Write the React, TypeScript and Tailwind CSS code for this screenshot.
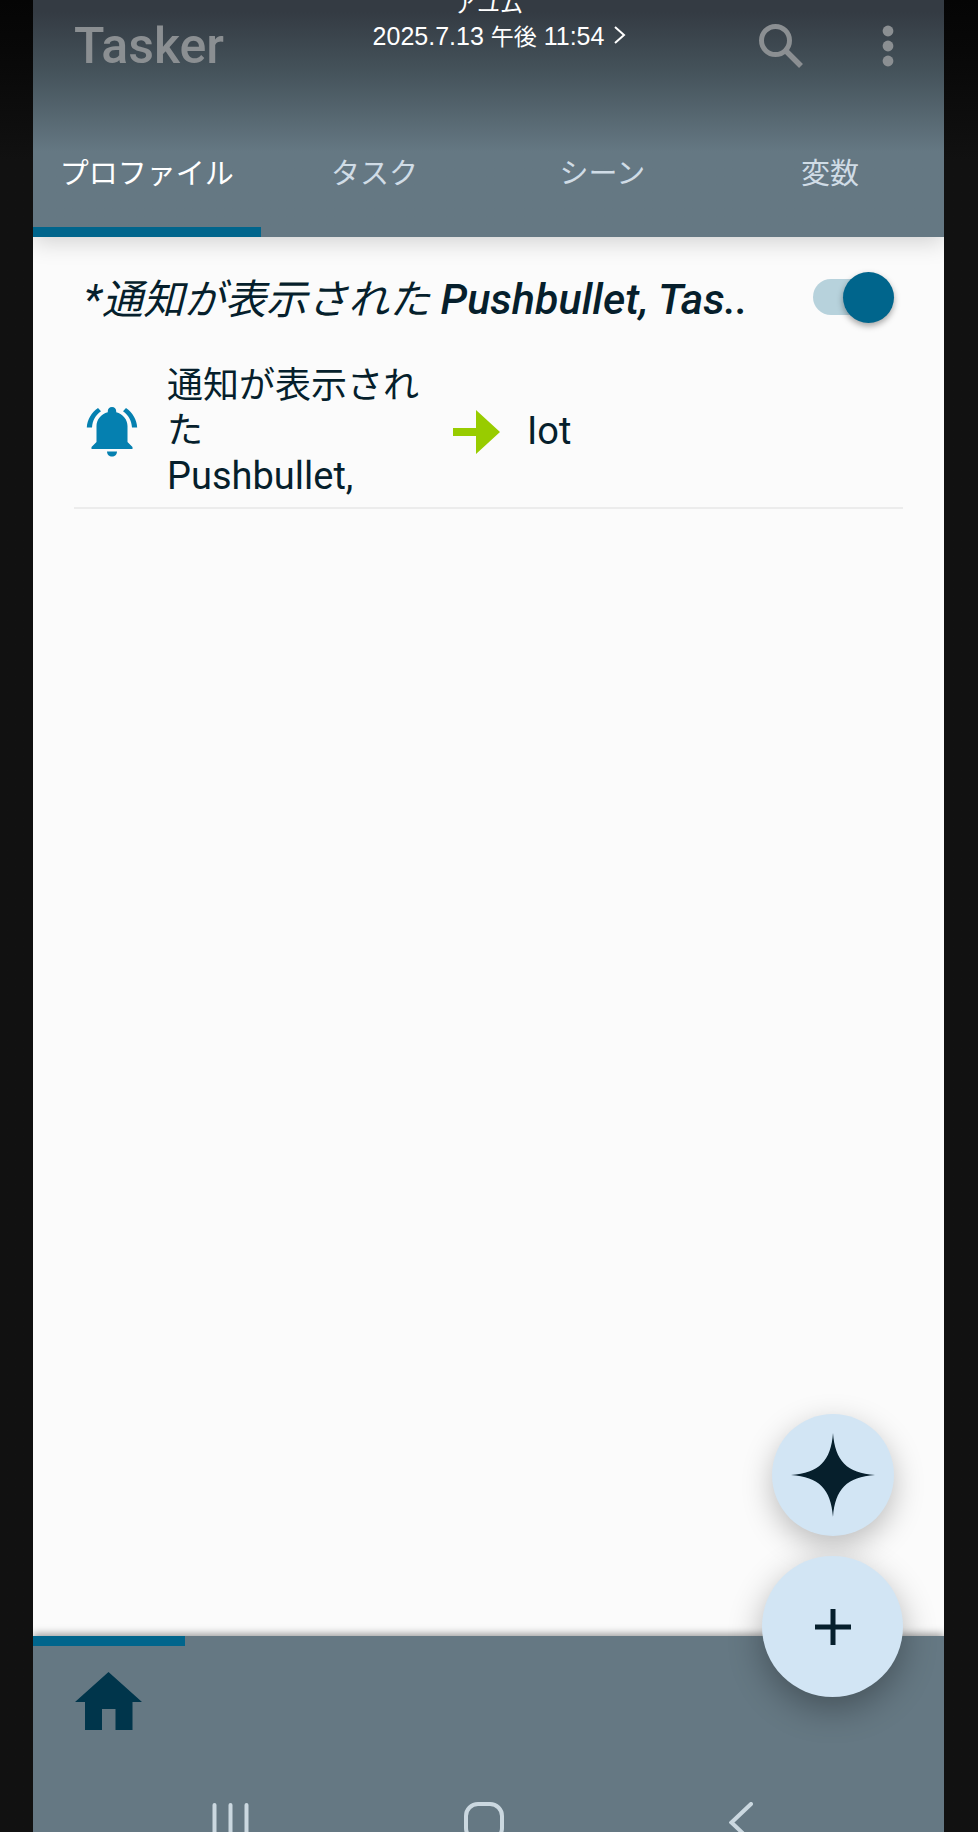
import { useState } from "react";

const tabs = ["プロファイル", "タスク", "シーン", "変数"];

function SearchIcon() {
  return (
    <svg viewBox="0 0 44 44" className="size-11" fill="none" stroke="currentColor">
      <circle cx="16.500" cy="16.500" r="14" strokeWidth="5" />
      <path d="M27 27L42 42" strokeWidth="5.500" />
      <path d="M25 28L29 24" strokeWidth="2" />
    </svg>
  );
}

function MoreIcon() {
  return (
    <svg viewBox="0 0 12 42" className="h-[42px] w-3" fill="currentColor">
      <circle cx="6" cy="6" r="5.400" />
      <circle cx="6" cy="21" r="5.400" />
      <circle cx="6" cy="36" r="5.400" />
    </svg>
  );
}

function BellIcon() {
  return (
    <svg viewBox="0 0 52 50" className="h-[50px] w-[52px] shrink-0 text-[#0580b0]" fill="currentColor">
      <path d="M26 0c-2.600 0-4.200 1.800-4.200 4v1.200C15 7 10.500 12.500 10.500 19v16L5.500 40v2h41v-2L41.500 35V19c0-6.500-4.500-12-11.300-13.800V4c0-2.200-1.600-4-4.200-4z" />
      <path d="M21 44.500h10c0 3-2.200 5-5 5s-5-2-5-5z" />
      <path d="M12 1l3 3.200C9.500 8 6.500 13.500 6 20.500H.8C1.200 12.500 5.500 5.500 12 1z" />
      <path d="M40 1l-3 3.200c5.500 3.800 8.500 9.300 9 16.300h5.200C50.800 12.500 46.500 5.500 40 1z" />
    </svg>
  );
}

function ArrowIcon() {
  return (
    <svg viewBox="0 0 47 44" className="h-11 w-[47px] shrink-0 text-[#98cc00]" fill="currentColor">
      <path d="M0 18h23V0l24 22-24 22V26H0z" />
    </svg>
  );
}

function HomeIcon() {
  return (
    <svg viewBox="0 0 67 58" className="h-[58px] w-[67px]" fill="#00354b">
      <path d="M33.500 0L67 30H57.500V58H40.500V37H27V58H10V30H0z" />
    </svg>
  );
}

export default function App() {
  const [active, setActive] = useState(0);
  const [enabled, setEnabled] = useState(true);

  return (
    <div className="min-h-screen bg-[#111] bg-linear-to-b from-[#050505] to-[#111] to-[160px] pl-[33px] pr-[34px] font-[Roboto,'Noto_Sans_CJK_JP',sans-serif]">
      <div className="relative flex min-h-screen flex-col overflow-hidden bg-[#fbfbfb]">
        <header className="relative z-10 bg-[#657883] bg-linear-to-b from-[#343b43] from-[12px] via-[#45535b] via-[72px] to-[#657883] to-[152px] shadow-[0_5px_22px_rgba(0,0,0,0.17)]">
          <div className="flex h-[92px] items-center justify-between pl-[41px] pr-[50px] text-[#8b8f92]">
            <h1 className="text-[50px] leading-none font-medium">Tasker</h1>
            <div className="flex items-center gap-[79px]">
              <button aria-label="検索"><SearchIcon /></button>
              <button aria-label="メニュー"><MoreIcon /></button>
            </div>
          </div>
          <div className="absolute inset-x-0 -top-3 flex flex-col items-center font-['Liberation_Sans','Noto_Sans_CJK_JP',sans-serif] leading-8 text-white">
            <div className="text-[23px]">アユム</div>
            <div className="relative text-[25px] whitespace-nowrap">
              2025.7.13 <span className="text-[23px]">午後</span> 11:54
              <svg viewBox="0 0 12 18" className="absolute top-[6px] left-full ml-2.5 h-[18px] w-3" fill="none" stroke="currentColor" strokeWidth="2">
                <path d="M1 1L10 9L1 17" />
              </svg>
            </div>
          </div>
          <div role="tablist" className="mt-[27px] grid grid-cols-4">
            {tabs.map((tab, i) => (
              <button
                key={tab}
                role="tab"
                aria-selected={i === active}
                onClick={() => setActive(i)}
                className={
                  i === active
                    ? "flex h-[118px] items-center justify-center border-b-10 border-[#00658c] pt-1 text-[29px] text-white"
                    : "flex h-[118px] items-center justify-center border-b-10 border-transparent pt-1 text-[29px] text-[#d0dce6]"
                }
              >
                {tab}
              </button>
            ))}
          </div>
        </header>

        <main className="flex-1 px-[41px] text-[#061f2c]">
          <section className="border-b-2 border-[#ececec] pt-[28px] pb-[8px]">
            <div className="flex items-start justify-between pr-[9px] pl-[10px]">
              <h2 className="pt-0.5 text-[43px] leading-[64px] whitespace-nowrap italic">
                *<span className="text-[41px]">通知が表示された</span> <span className="font-medium">Pushbullet, Tas..</span>
              </h2>
              <button role="switch" aria-checked={enabled} aria-label="プロファイルを有効化" onClick={() => setEnabled(!enabled)} className="flex h-16 w-[81px] shrink-0 items-center">
                <span className="flex h-9 w-[76px] items-center rounded-full bg-[#b7d2dc] pl-[30px]">
                  <span className="size-[51px] shrink-0 rounded-full bg-[#00658c] shadow-[0_3px_6px_rgba(0,0,0,0.35)]" />
                </span>
              </button>
            </div>
            <div className="mt-8 flex items-center pl-3">
              <BellIcon />
              <div className="ml-[29px] w-[256px] leading-[45px]">
                <p className="text-[36px]">通知が表示された</p>
                <p className="text-[38px]">Pushbullet,</p>
              </div>
              <div className="ml-[30px]"><ArrowIcon /></div>
              <p className="ml-[27px] text-[38px] leading-[45px]">Iot</p>
            </div>
          </section>
        </main>

        <footer className="relative h-[196px] bg-[#657883] shadow-[0_-2px_8px_rgba(0,0,0,0.4)]">
          <div className="h-2.5 w-[152px] bg-[#00658c]" />
          <button aria-label="ホーム" className="mt-[26px] ml-[42px] block"><HomeIcon /></button>
          <nav className="mt-[72px] flex h-[30px] items-start justify-between overflow-hidden pr-[191px] pl-[178px] text-[#cbd8e0]">
            <button aria-label="最近使ったアプリ">
              <svg viewBox="0 0 40 40" className="size-10" fill="none" stroke="currentColor" strokeWidth="4" strokeLinecap="round">
                <path d="M3.500 3V38M19.500 3V38M35.500 3V38" />
              </svg>
            </button>
            <button aria-label="ホーム画面" className="mr-3">
              <svg viewBox="0 0 40 40" className="size-10" fill="none" stroke="currentColor" strokeWidth="4">
                <rect x="2" y="2" width="36" height="36" rx="12" />
              </svg>
            </button>
            <button aria-label="戻る">
              <svg viewBox="0 0 24 44" className="h-11 w-6" fill="none" stroke="currentColor" strokeWidth="4" strokeLinecap="round">
                <path d="M22 2L2.500 20.500L22 39" />
              </svg>
            </button>
          </nav>
        </footer>

        <div className="absolute right-[41px] bottom-[135px] z-20 flex flex-col items-center gap-[20px]">
          <button aria-label="AI で作成" className="flex size-[122px] items-center justify-center rounded-full bg-[#d2e5f4] shadow-[0_10px_30px_rgba(0,0,0,0.25)]">
            <svg viewBox="0 0 84 84" className="size-[84px]" fill="#061f2c">
              <path d="M42 0C44 28 56 40 84 42C56 44 44 56 42 84C40 56 28 44 0 42C28 40 40 28 42 0z" />
            </svg>
          </button>
          <button aria-label="追加" className="flex size-[141px] items-center justify-center rounded-full bg-[#d2e5f4] shadow-[0_12px_34px_rgba(0,0,0,0.3)]">
            <svg viewBox="0 0 36 36" className="size-9" stroke="#061f2c" strokeWidth="5">
              <path d="M0 18H36M18 0V36" />
            </svg>
          </button>
        </div>
      </div>
    </div>
  );
}
